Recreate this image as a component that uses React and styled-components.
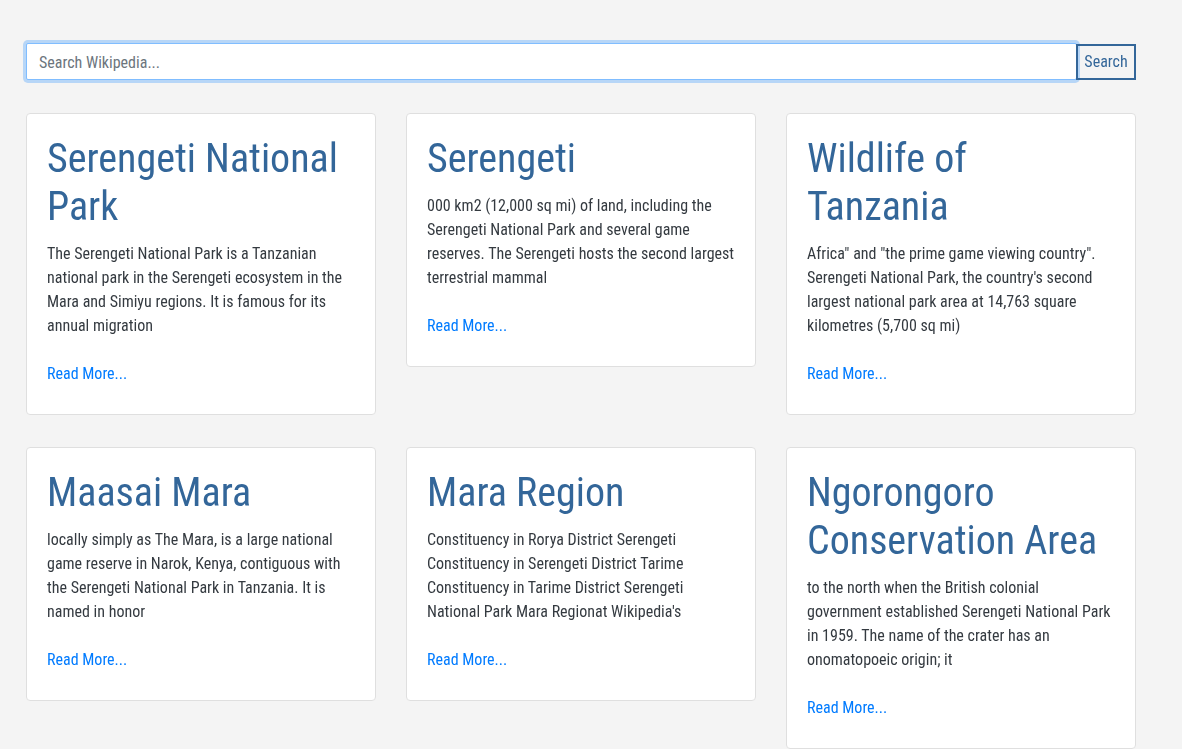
import React from "react";
import styled, { createGlobalStyle } from "styled-components";

const Global = createGlobalStyle`
  html, body { margin: 0; padding: 0; background: #f4f4f4; }
  body {
    font-family: "Roboto Condensed", Roboto, "Liberation Sans", sans-serif;
    font-stretch: condensed;
    color: #333;
  }
  * { box-sizing: border-box; }
`;

const Page = styled.div`
  padding: 43px 0 40px 26px;
  width: 1136px;
`;

const SearchBar = styled.form`
  display: flex;
  align-items: center;
  margin-bottom: 33px;
`;

const SearchInput = styled.input`
  flex: 1;
  height: 37px;
  border: 1px solid #80bdff;
  border-radius: 2px;
  box-shadow: 0 0 0 3px rgba(0, 123, 255, 0.25);
  background: #fff;
  padding: 1px 12px 0;
  font-family: inherit;
  font-stretch: condensed;
  font-size: 16px;
  color: #495057;
  outline: none;
  &::placeholder { color: #6c757d; }
`;

const SearchButton = styled.button`
  height: 36px;
  width: 60px;
  border: 2px solid #336699;
  background: transparent;
  color: #336699;
  font-family: inherit;
  font-stretch: condensed;
  font-size: 16px;
  padding: 0;
  margin-left: -1px;
`;

const Grid = styled.div`
  display: grid;
  grid-template-columns: repeat(3, 350px);
  column-gap: 30px;
  row-gap: 32px;
  align-items: start;
`;

const Card = styled.div`
  background: #fff;
  border: 1px solid #dfdfdf;
  border-radius: 4px;
  padding: 21px 20px 28px;
`;

const Title = styled.h2`
  margin: 0 0 11px;
  font-size: 40px;
  line-height: 48px;
  font-weight: 400;
  color: #336699;
`;

const Snippet = styled.p`
  margin: 0 0 24px;
  font-size: 16px;
  line-height: 24px;
  color: #343a40;
`;

const ReadMore = styled.a`
  display: block;
  font-size: 16px;
  line-height: 24px;
  color: #007bff;
  text-decoration: none;
`;

const results = [
  {
    title: "Serengeti National Park",
    text: "The Serengeti National Park is a Tanzanian national park in the Serengeti ecosystem in the Mara and Simiyu regions. It is famous for its annual migration",
  },
  {
    title: "Serengeti",
    text: "000 km2 (12,000 sq mi) of land, including the Serengeti National Park and several game reserves. The Serengeti hosts the second largest terrestrial mammal",
  },
  {
    title: "Wildlife of Tanzania",
    text: "Africa\" and \"the prime game viewing country\". Serengeti National Park, the country's second largest national park area at 14,763 square kilometres (5,700 sq mi)",
  },
  {
    title: "Maasai Mara",
    text: "locally simply as The Mara, is a large national game reserve in Narok, Kenya, contiguous with the Serengeti National Park in Tanzania. It is named in honor",
  },
  {
    title: "Mara Region",
    text: "Constituency in Rorya District Serengeti Constituency in Serengeti District Tarime Constituency in Tarime District Serengeti National Park Mara Regionat Wikipedia's",
  },
  {
    title: "Ngorongoro Conservation Area",
    text: "to the north when the British colonial government established Serengeti National Park in 1959. The name of the crater has an onomatopoeic origin; it",
  },
];

export default function App() {
  return (
    <>
      <Global />
      <Page>
        <SearchBar onSubmit={(e) => e.preventDefault()}>
          <SearchInput placeholder="Search Wikipedia..." autoFocus />
          <SearchButton type="submit">Search</SearchButton>
        </SearchBar>
        <Grid>
          {results.map((r) => (
            <Card key={r.title}>
              <Title>{r.title}</Title>
              <Snippet>{r.text}</Snippet>
              <ReadMore href="#">Read More...</ReadMore>
            </Card>
          ))}
        </Grid>
      </Page>
    </>
  );
}
